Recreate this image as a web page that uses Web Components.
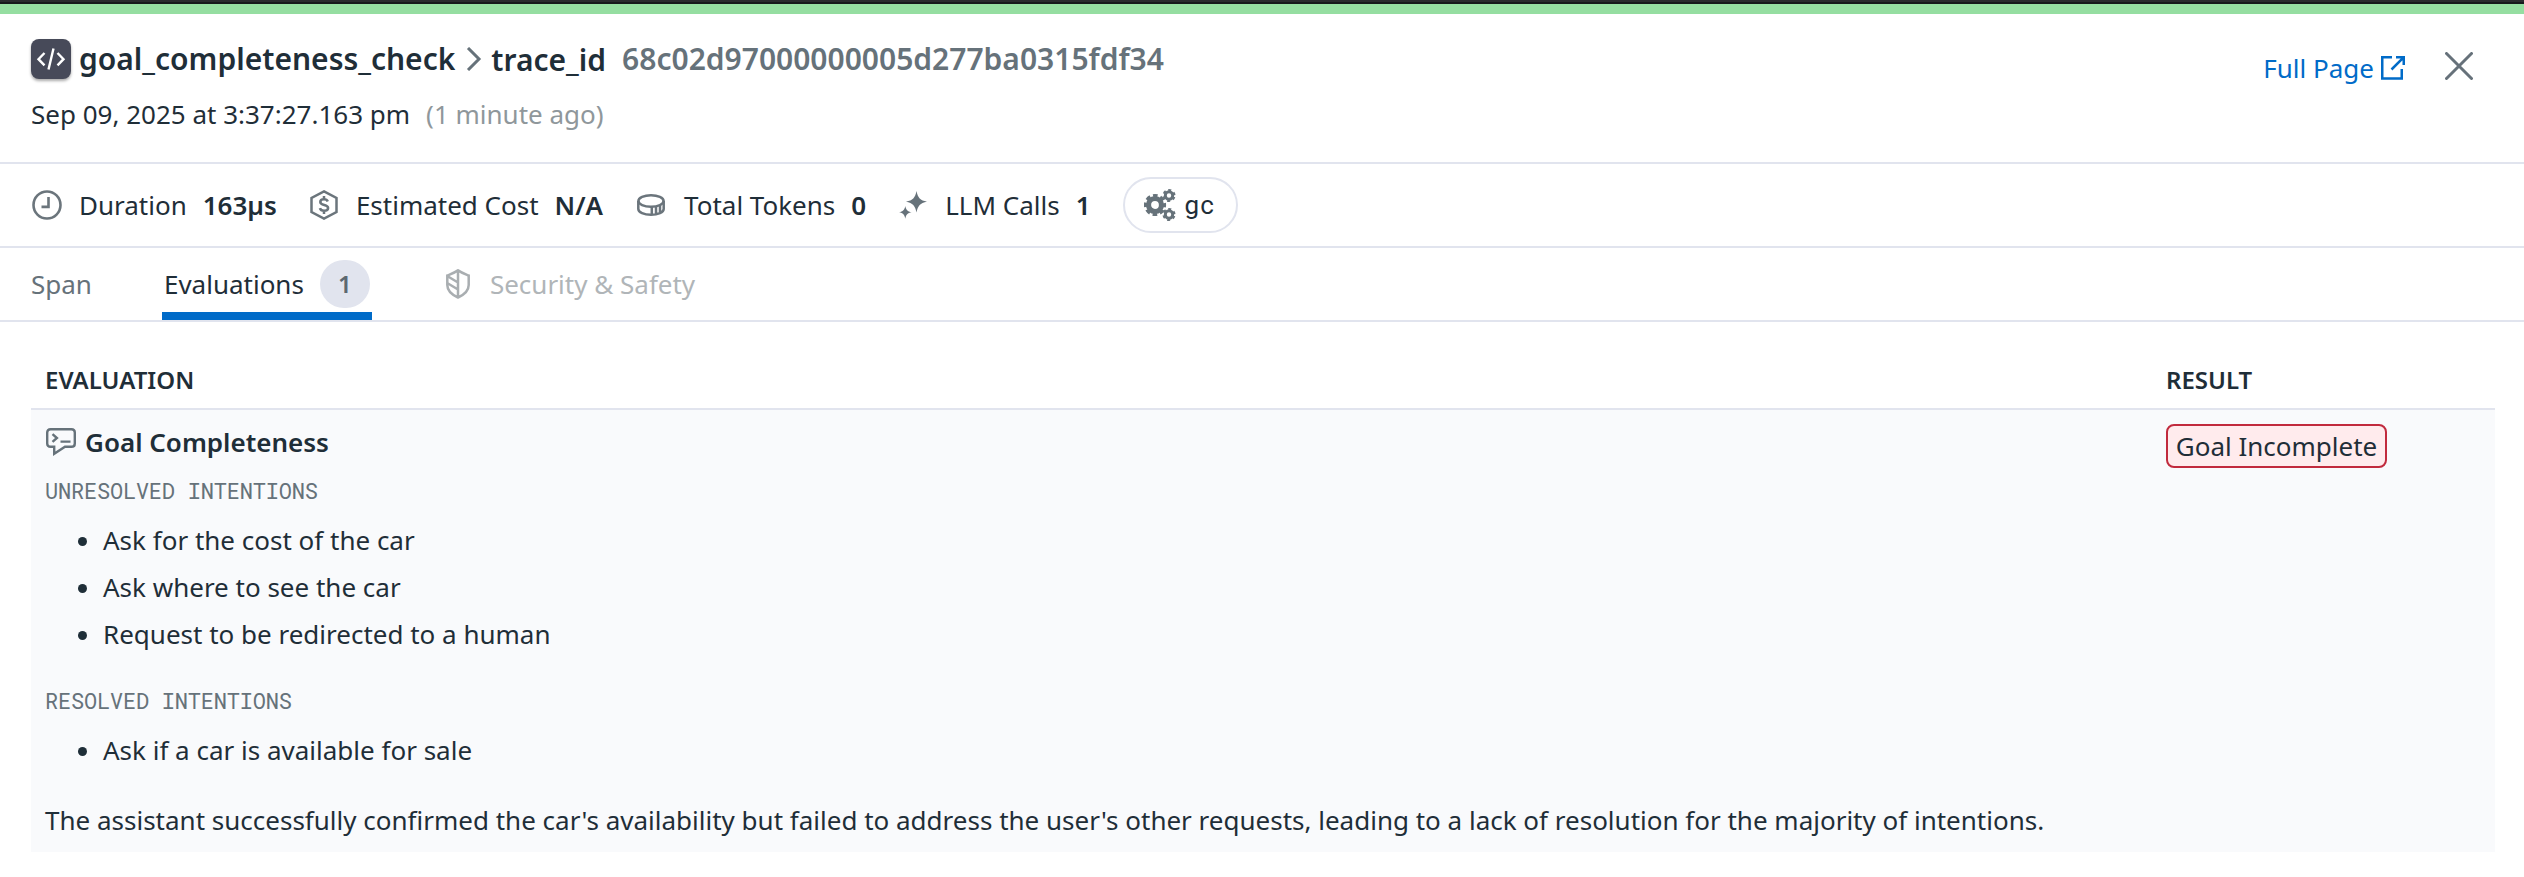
<!DOCTYPE html>
<html lang="en">
<head>
<meta charset="utf-8">
<title>goal_completeness_check</title>
<style>
html,body{margin:0;background:#fff}
body{font-family:"Noto Sans",sans-serif;font-size:26px;color:#1f2e38;width:2524px;height:877px;overflow:hidden}
</style>
</head>
<body>
<trace-panel></trace-panel>
<script>
const ICONS = {
  code:`<svg viewBox="0 0 40 40" width="40" height="40" fill="none" stroke="#fff" stroke-width="2.400"><path d="M13.500 14l-6 6.200 6 6.200M26.500 14l6 6.200-6 6.200M22.500 9.500l-5 21"/></svg>`,
  chevron:`<svg viewBox="0 0 16 24" width="16" height="24" fill="none" stroke="#66727a" stroke-width="3"><path d="M2 1l11 11L2 23"/></svg>`,
  external:`<svg viewBox="0 0 24 24" width="24" height="24" fill="none" stroke="#006bc8" stroke-width="2.500"><path d="M11 1.250H1.250v21.300H20.750V13M15 1.250h7.750V9M22.600 1.400L10.500 13.500"/></svg>`,
  close:`<svg viewBox="0 0 28 28" width="28" height="28" fill="none" stroke="#66717a" stroke-width="3" stroke-linecap="round"><path d="M1.500 1.500l25 25M26.500 1.500l-25 25"/></svg>`,
  clock:`<svg viewBox="0 0 30 30" width="30" height="30" fill="none" stroke="#6b757c" stroke-width="2.600"><circle cx="15" cy="15" r="13.500"/><path d="M16.500 7v9.900H9.500"/></svg>`,
  cost:`<svg viewBox="0 0 28 30" width="28" height="30" fill="none" stroke="#6b757c" stroke-width="2.500"><path d="M14 1.400l12.500 6.600v14L14 28.600 1.500 22V8z"/><path d="M17.800 11.500c-.6-1.500-2-2.200-3.800-2.200-2.300 0-3.700 1-3.700 2.700 0 4 7.800 2 7.800 5.900 0 1.800-1.700 2.800-4.100 2.800-2.300 0-3.600-.9-4.100-2.600M14 6v3.300M14 20.700V24"/></svg>`,
  token:`<svg viewBox="0 0 28 22" width="28" height="22" fill="none" stroke="#6b757c" stroke-width="2.500"><ellipse cx="14" cy="7" rx="12.600" ry="5.700"/><path d="M1.300 7v8c0 3.300 5.700 5.700 12.700 5.700s12.700-2.400 12.700-5.700V7M14.800 13v7.500M19 12.500v7.300M23 11v7"/></svg>`,
  spark:`<svg viewBox="0 0 28 28" width="28" height="28" fill="#66727a"><path d="M17.500 0c1.500 7 3.500 9.200 10.500 10.700-7 1.500-9 3.700-10.500 10.700C16 14.400 14 12.200 7 10.700 14 9.200 16 7 17.500 0zM6.300 15c.8 4 2.200 5.500 6.300 6.300-4.100.8-5.500 2.300-6.300 6.500-.8-4.200-2.200-5.700-6.300-6.500 4.100-.8 5.500-2.300 6.300-6.300z"/></svg>`,
  gears:`<svg viewBox="0 0 32 32" width="32" height="32" fill="none" stroke="#66727a"><circle cx="11" cy="16" r="6.500" stroke-width="5.200"/><circle cx="11" cy="16" r="9.600" stroke-width="3" stroke-dasharray="4.600 2.940" stroke-dashoffset="2.300"/><circle cx="25" cy="6.500" r="3.700" stroke-width="3"/><circle cx="25" cy="6.500" r="5.500" stroke-width="2" stroke-dasharray="3 2.760" stroke-dashoffset="-1.500"/><circle cx="25" cy="25.500" r="3.700" stroke-width="3"/><circle cx="25" cy="25.500" r="5.500" stroke-width="2" stroke-dasharray="3 2.760" stroke-dashoffset="-1.500"/></svg>`,
  shield:`<svg viewBox="0 0 24 30" width="24" height="30" fill="none" stroke="#a9aeb1" stroke-width="2.500"><path d="M12 1.400C8.500 3.800 5 5 1.300 6.500V16c0 6 4 9.500 10.700 12.500 6.700-3 10.700-6.500 10.700-12.500V6.500C19 5 15.500 3.800 12 1.400zM12 1.300v27.400M1.200 7L12 13.500M1.200 14L12 20.500"/></svg>`,
  chat:`<svg viewBox="0 0 30 28" width="30" height="28" fill="none" stroke="#66727a" stroke-width="2.400"><path d="M4.600 1.200h20.800q3.400 0 3.400 3.400v10.800q0 3.400-3.400 3.400H19L8.200 25.800V18.800H4.600q-3.400 0-3.400-3.400V4.600q0-3.400 3.400-3.400zM6.500 6.200l4.400 3.800-4.400 3.800M14.500 13.600h10"/></svg>`
};
const define = (name, html) => customElements.define(name, class extends HTMLElement {
  constructor(){
    super();
    this.attachShadow({mode:'open'}).innerHTML = html;
  }
});

customElements.define('ui-icon', class extends HTMLElement {
  connectedCallback(){
    if (this.shadowRoot) return;
    this.attachShadow({mode:'open'}).innerHTML =
      `<style>:host{display:block;flex:none}svg{display:block}</style>${ICONS[this.getAttribute('name')]}`;
  }
});

define('stat-item', `<style>
:host{display:flex;align-items:center;line-height:36px;white-space:nowrap}
.i{display:flex;width:var(--iw,47px);flex:none}
b{font-weight:600;margin-left:16px}
</style><span class="i"><slot name="icon"></slot></span><span><slot></slot></span><b><slot name="value"></slot></b>`);

define('tag-pill', `<style>
:host{display:flex;align-items:center;box-sizing:border-box;width:115px;height:56px;border:2px solid #e1e4ee;border-radius:28px;padding-left:19px;gap:9px;font-family:Roboto,sans-serif;letter-spacing:1px}
</style><slot></slot>`);

define('tab-item', `<style>
:host{display:flex;align-items:center;height:72px;box-sizing:border-box;color:#66727a;line-height:36px;white-space:nowrap}
:host([active]){color:#1f2e38;border-bottom:8px solid #006bc8;padding:8px 2px 0 2px}
:host([disabled]){color:#b0b5b8}
</style><slot></slot>`);

define('count-badge', `<style>
:host{display:block;width:50px;height:48px;border-radius:24px;background:#e1e4ee;color:#5c6870;font-size:24px;font-weight:600;line-height:47px;text-align:center}
</style><slot></slot>`);

define('result-badge', `<style>
:host{display:block;box-sizing:border-box;width:221px;height:44px;border:2px solid #c12a3d;border-radius:8px;background:#ffebed;line-height:40px;text-align:center;white-space:nowrap}
</style><slot></slot>`);

define('intent-group', `<style>
:host{display:block}
h4{margin:0;font:400 22px/33px "Roboto Mono","Liberation Mono",monospace;letter-spacing:-.22px;height:32px;color:#66727a;text-transform:uppercase}
</style><h4><slot name="heading"></slot></h4><slot></slot>`);

define('intent-item', `<style>
:host{display:flex;align-items:center;height:47px;line-height:47px;padding-left:33px}
i{width:9px;height:9px;border-radius:50%;background:#1f2e38;margin-right:16px;margin-top:2px}
</style><i></i><span><slot></slot></span>`);

define('trace-header', `<style>
:host{display:flex;justify-content:space-between;height:148px;border-bottom:2px solid #e1e4ee;padding:0 51px 0 31px}
.row{display:flex;align-items:center;white-space:nowrap}
.l{padding-top:25px}
.title{height:40px;font-size:30px;font-weight:600;line-height:40px}
.logo{width:40px;height:40px;border-radius:8px;background:#474a59;box-shadow:0 2px 3px #0005;margin-right:8px}
.chev{margin:0 9px 0 11px}
.tid{padding-top:1px}
.id{color:#66727a;margin-left:16px}
.date{margin-top:17px;line-height:36px;height:36px}
.ago{color:#8f979b;margin-left:16px}
.r{padding-top:38px;height:28px}
.link{color:#006bc8;margin-right:7px;padding-top:4px}
.ext{padding-top:4px;margin-right:40px}
</style>
<div class="l">
<div class="row title"><span class="logo"><ui-icon name="code"></ui-icon></span><span class="name">goal_completeness_check</span><ui-icon class="chev" name="chevron"></ui-icon><span class="tid">trace_id</span><span class="id">68c02d97000000005d277ba0315fdf34</span></div>
<div class="row date"><span>Sep 09, 2025 at 3:37:27.163 pm</span><span class="ago">(1 minute ago)</span></div>
</div>
<div class="row r"><span class="link">Full Page</span><ui-icon class="ext" name="external"></ui-icon><ui-icon name="close"></ui-icon></div>`);

define('trace-stats', `<style>
:host{display:flex;align-items:center;height:82px;border-bottom:2px solid #e1e4ee;padding-left:32px}
</style>
<stat-item style="margin-right:33px"><ui-icon slot="icon" name="clock"></ui-icon>Duration<span slot="value">163µs</span></stat-item>
<stat-item style="--iw:46px;margin-right:34px"><ui-icon slot="icon" name="cost"></ui-icon>Estimated Cost<span slot="value">N/A</span></stat-item>
<stat-item style="margin-right:33px"><ui-icon slot="icon" name="token"></ui-icon>Total Tokens<span slot="value">0</span></stat-item>
<stat-item style="--iw:46px;margin-right:32px"><ui-icon slot="icon" name="spark"></ui-icon>LLM Calls<span slot="value">1</span></stat-item>
<tag-pill><ui-icon name="gears"></ui-icon><span>gc</span></tag-pill>`);

define('trace-tabs', `<style>
:host{display:flex;height:72px;border-bottom:2px solid #e1e4ee;padding-left:31px}
</style>
<tab-item style="margin-right:70px">Span</tab-item>
<tab-item active style="margin-right:74px"><span>Evaluations</span><count-badge style="margin-left:16px">1</count-badge></tab-item>
<tab-item disabled><ui-icon name="shield" style="margin-right:20px"></ui-icon><span>Security &amp; Safety</span></tab-item>`);

define('eval-table', `<style>
:host{display:block;margin:38px 29px 0 31px}
.head,.body{display:grid;grid-template-columns:2121px 1fr;padding-left:14px}
.head{height:48px;border-bottom:2px solid #e1e4ee;font-size:24px;font-weight:600;line-height:40px}
.body{height:442px;background:#f9fafc;box-sizing:border-box}
.name{display:flex;align-items:center;height:36px;margin:14px 0 0 1px;font-weight:600;gap:9px}
p{margin:0;line-height:36px;white-space:nowrap}
</style>
<div class="head"><span>EVALUATION</span><span>RESULT</span></div>
<div class="body"><div>
<div class="name"><ui-icon name="chat"></ui-icon><span>Goal Completeness</span></div>
<intent-group style="margin-top:14px"><span slot="heading">Unresolved Intentions</span><intent-item style="margin-top:11px">Ask for the cost of the car</intent-item><intent-item>Ask where to see the car</intent-item><intent-item>Request to be redirected to a human</intent-item></intent-group>
<intent-group style="margin-top:26px"><span slot="heading">Resolved Intentions</span><intent-item style="margin-top:11px">Ask if a car is available for sale</intent-item></intent-group>
<p style="margin-top:28px">The assistant successfully confirmed the car's availability but failed to address the user's other requests, leading to a lack of resolution for the majority of intentions.</p>
</div><result-badge style="margin-top:14px">Goal Incomplete</result-badge></div>`);

define('trace-panel', `<style>
:host{display:block;border-top:2px solid #2a2b2e}
.bar{height:10px;border-top:2px solid #17191c;background:#95dea1}
</style><div class="bar"></div><trace-header></trace-header><trace-stats></trace-stats><trace-tabs></trace-tabs><eval-table></eval-table>`);
</script>
</body>
</html>
